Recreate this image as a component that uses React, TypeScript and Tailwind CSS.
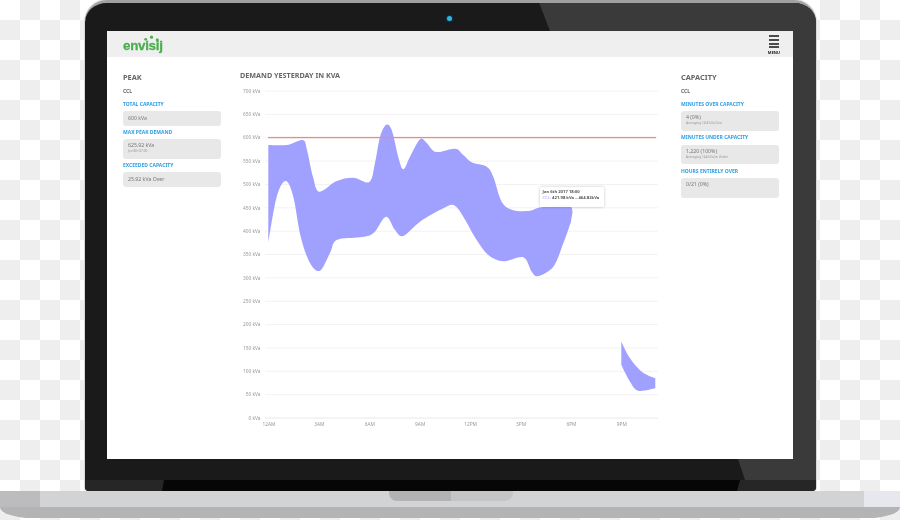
import React from "react";

type P = [number, number];

const bandTop: P[] = [[268.3,145],[286.7,145],[302.7,140],[307,150],[313,177],[319.3,191.7],[336.7,181],[353.3,177.7],[369.3,182],[375,163],[380,137],[386,125],[391.7,130],[398.3,157],[403.3,169.3],[410,156.7],[420,139.3],[426.7,143],[436,152],[455,148.7],[463.3,155],[471.7,162.3],[486.7,166.7],[493.3,176.7],[501.7,201.7],[513.3,210.3],[530,210.7],[541.7,207.3],[570,206],[571,221.7]];
const bandBottom: P[] = [[571,221.7],[563.3,243.3],[553.3,266.7],[538.3,276],[531.7,271.7],[523.3,257.3],[503.3,261.3],[488.3,255],[476.7,240],[463.3,216.7],[454,205.3],[443.3,208.3],[420,221.7],[403.3,236],[395,230],[386,216.7],[373.3,233.3],[360,237.3],[336.7,240],[330,253],[320,270.7],[310,263],[300.7,236.7],[293.3,196.7],[285.7,181],[276.7,196.7],[268.3,242.7]];
const smallTop: P[] = [[621.3,341.7],[630,358.3],[641.7,371.7],[655.3,378.3]];
const smallBottom: P[] = [[655.3,388.3],[638.3,390.7],[630,381.7],[621.3,365]];

function smooth(pts: P[]): string {
  let d = "";
  for (let i = 0; i < pts.length - 1; i++) {
    const p0 = pts[Math.max(0, i - 1)];
    const p1 = pts[i];
    const p2 = pts[i + 1];
    const p3 = pts[Math.min(pts.length - 1, i + 2)];
    const c1x = p1[0] + (p2[0] - p0[0]) / 6;
    const c1y = p1[1] + (p2[1] - p0[1]) / 6;
    const c2x = p2[0] - (p3[0] - p1[0]) / 6;
    const c2y = p2[1] - (p3[1] - p1[1]) / 6;
    d += ` C${c1x.toFixed(1)} ${c1y.toFixed(1)} ${c2x.toFixed(1)} ${c2y.toFixed(1)} ${p2[0]} ${p2[1]}`;
  }
  return d;
}

function band(top: P[], bottom: P[]): string {
  return `M${top[0][0]} ${top[0][1]}` + smooth(top) + ` L${bottom[0][0]} ${bottom[0][1]}` + smooth(bottom) + " Z";
}

const yValues = [700, 650, 600, 550, 500, 450, 400, 350, 300, 250, 200, 150, 100, 50, 0];
const xLabels = ["12AM", "3AM", "6AM", "9AM", "12PM", "3PM", "6PM", "9PM"];

function Stat({ label, value, sub, tall }: { label: string; value: string; sub?: string; tall?: boolean }) {
  return (
    <div className="flex flex-col">
      <div className="h-[7px] text-[5px] leading-[7px] font-bold text-[#2f9fe4] whitespace-nowrap">{label}</div>
      <div className={`mt-[3.5px] rounded-[3px] bg-[#e8e8e8] pl-[5px] flex flex-col ${tall ? "h-[19.5px] pt-[3px]" : "h-[14.5px] justify-center"}`}>
        <div className="text-[5.2px] leading-[7px] text-[#777] whitespace-nowrap">{value}</div>
        {sub && <div className="text-[3.2px] leading-[5px] text-[#999] whitespace-nowrap">{sub}</div>}
      </div>
    </div>
  );
}

function SideHead({ title }: { title: string }) {
  return (
    <>
      <div className="h-[10px] text-[7.4px] leading-[10px] font-bold text-[#666]">{title}</div>
      <div className="mt-[5.5px] h-[7px] text-[5px] leading-[7px] font-bold text-[#666]">CCL</div>
    </>
  );
}

export default function App() {
  return (
    <div
      className="w-[900px] h-[520px] overflow-hidden flex flex-col bg-[conic-gradient(#eeeeee_25%,#ffffff_0_50%,#eeeeee_0_75%,#ffffff_0)] bg-[length:40px_40px]"
      style={{ fontFamily: '"Noto Sans", "Open Sans", sans-serif' }}
    >
      {/* Lid */}
      <div className="relative ml-[85px] mr-[84px] h-[491px] shrink-0 rounded-t-[22px] rounded-b-[4px] bg-[#1a1a1a] border-t-[3px] border-[#a0a0a0] shadow-[0_0_0_1px_#d8d8dc] overflow-hidden px-[22px] pt-[28px]">
        <svg className="absolute left-0 top-[-3px]" width="731" height="491" viewBox="85 0 731 491">
          <polygon points="538,0 816,0 816,480 745,480 738,459 793,459 793,31 550,31" fill="#3a3a3a" />
          <rect x="85" y="480" width="731" height="11" fill="#262626" />
          <polygon points="162,491 164,480 745,480 740,480 737,491" fill="#060606" />
        </svg>
        <div className="absolute left-[362px] top-[12.5px] w-[5px] h-[5px] rounded-full bg-[#35b4de] shadow-[0_0_1px_1px_#0d3a4a]" />

        {/* Screen */}
        <div className="relative w-[686px] h-[428px] bg-white flex flex-col blur-[0.5px]">
          <header className="h-[26px] shrink-0 bg-[#efefef] flex items-center justify-between pl-[16px] pr-[14px]">
            <div className="relative w-[40px] h-[22px]">
              <svg className="absolute left-0 top-0" width="40" height="12" viewBox="123 33 40 12">
                <circle cx="145.7" cy="39.3" r="1.4" fill="#4cae4f" />
                <circle cx="151.5" cy="37.2" r="1.6" fill="#4cae4f" />
                <circle cx="157.3" cy="39.8" r="1.5" fill="#4cae4f" />
              </svg>
              <div
                className="absolute left-0 top-[5px] text-[13.4px] leading-[16px] font-bold tracking-[-0.3px] text-[#4cae4f] [-webkit-text-stroke:0.3px_#4cae4f]"
                style={{ fontFamily: '"Liberation Sans", sans-serif' }}
              >
                envisij
              </div>
            </div>
            <div className="flex flex-col items-center gap-[1.6px] w-[10px] pt-[2px]">
              <div className="w-[10px] h-[2px] bg-[#4a4a4a]" />
              <div className="w-[10px] h-[2px] bg-[#4a4a4a]" />
              <div className="w-[10px] h-[2px] bg-[#4a4a4a]" />
              <div className="w-[10px] h-[2px] bg-[#4a4a4a]" />
              <div className="text-[4px] leading-[5px] font-bold text-[#222]">MENU</div>
            </div>
          </header>

          <main className="flex pl-[16px]">
            <aside className="w-[98px] shrink-0 pt-[15px]">
              <SideHead title="PEAK" />
              <div className="mt-[6px] flex flex-col gap-[3px]">
                <Stat label="TOTAL CAPACITY" value="600 kVa" />
                <Stat label="MAX PEAK DEMAND" value="625.92 kVa" sub="Jan 8th 07:00" tall />
                <Stat label="EXCEEDED CAPACITY" value="25.92 kVa Over" />
              </div>
            </aside>

            <section className="relative w-[420px] ml-[19px] shrink-0 pt-[13px]">
              <div className="h-[10px] text-[7.2px] leading-[10px] font-bold text-[#666] whitespace-nowrap">DEMAND YESTERDAY IN KVA</div>
              <svg className="mt-[3px] block" width="420" height="355" viewBox="240 83 420 355" style={{ fontFamily: '"Noto Sans", sans-serif' }}>
                {yValues.map((v, i) => {
                  const y = 91 + i * 23.36;
                  return (
                    <g key={v}>
                      <line x1="265" x2="658" y1={y} y2={y} stroke={v === 0 ? "#e8e8e8" : "#f2f2f2"} strokeWidth="1" />
                      <text x="260.5" y={y + 1.7} textAnchor="end" fontSize="4.8" fill="#999">{v} kVa</text>
                    </g>
                  );
                })}
                {xLabels.map((l, i) => (
                  <text key={l} x={269 + i * 50.4} y="426" textAnchor="middle" fontSize="4.8" fill="#999">{l}</text>
                ))}
                <path d={band(bandTop, bandBottom)} fill="#a0a0ff" />
                <path d={band(smallTop, smallBottom)} fill="#a0a0ff" />
                <rect x="268" y="136.9" width="388" height="1.3" fill="#ee8a84" />
              </svg>
              <div className="absolute left-[300px] top-[130px] w-[64px] h-[19.5px] rounded-[2px] bg-white/95 shadow-[0_0_3px_#00000040] pl-[2.5px] pt-[1.5px]">
                <div className="text-[4.2px] leading-[6.5px] font-bold text-[#555] whitespace-nowrap">Jan 6th 2017 18:00</div>
                <div className="text-[4.2px] leading-[6.5px] font-bold text-[#555] whitespace-nowrap">
                  <span className="text-[#a0a0ff] font-normal">CCL:</span> 421.98 kVa – 464.82kVa
                </div>
              </div>
            </section>

            <aside className="w-[98px] ml-[21px] shrink-0 pt-[15px]">
              <SideHead title="CAPACITY" />
              <div className="mt-[6px] flex flex-col gap-[3.5px]">
                <Stat label="MINUTES OVER CAPACITY" value="4 (0%)" sub="Averaging 14.8 kVa Over" tall />
                <Stat label="MINUTES UNDER CAPACITY" value="1,220 (100%)" sub="Averaging 144 kVa/m Under" tall />
                <Stat label="HOURS ENTIRELY OVER" value="0/21 (0%)" tall />
              </div>
            </aside>
          </main>
        </div>
      </div>

      {/* Base */}
      <div className="relative h-[27px] shrink-0 flex flex-col overflow-hidden bg-[#b4b4b6] [border-radius:0_0_32px_32px/0_0_11px_11px]">
        <div className="h-[16px] shrink-0 flex bg-[#d2d3d5]">
          <div className="w-[40px] bg-[#bcbcbe]" />
          <div className="flex-1 flex justify-center">
            <div className="ml-[-2px] w-[124px] h-[10px] rounded-b-[8px] flex overflow-hidden">
              <div className="w-[62px] bg-[#b3b3b5]" />
              <div className="w-[62px] bg-[#c4c5c7]" />
            </div>
          </div>
          <div className="w-[36px] bg-[#e6e8ee]" />
        </div>
      </div>
    </div>
  );
}
